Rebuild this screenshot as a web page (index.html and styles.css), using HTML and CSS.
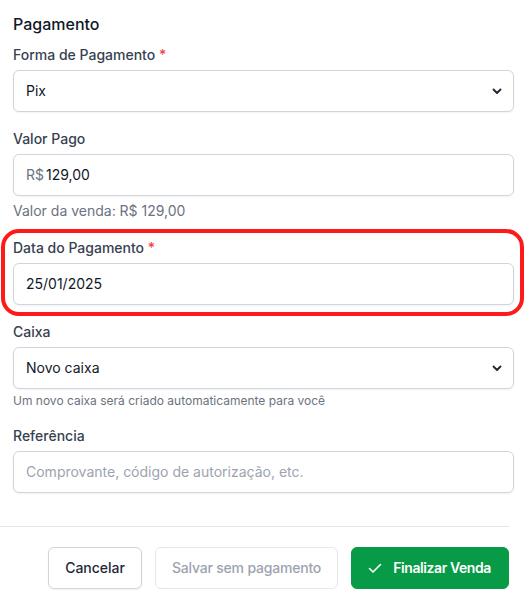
FILE: index.html
```html
<!DOCTYPE html>
<html lang="pt-BR">
<head>
<meta charset="utf-8">
<link rel="stylesheet" href="styles.css">
</head>
<body>
<div class="panel">
  <form class="form">
    <h2 class="title">Pagamento</h2>

    <div class="group">
      <label class="label">Forma de Pagamento <span class="req">*</span></label>
      <div class="field select">
        <span class="value">Pix</span>
        <svg class="chev" width="10" height="7" viewBox="0 0 10 7"><path d="M1.5 1.5 L5 5 L8.5 1.5" fill="none" stroke="#1f2937" stroke-width="1.9" stroke-linecap="round" stroke-linejoin="round"/></svg>
      </div>
    </div>

    <div class="group">
      <label class="label">Valor Pago</label>
      <div class="field">
        <span class="prefix">R$</span><span class="value">129,00</span>
      </div>
      <p class="help">Valor da venda: R$ 129,00</p>
    </div>

    <div class="group highlighted">
      <label class="label">Data do Pagamento <span class="req">*</span></label>
      <div class="field">
        <span class="value">25/01/2025</span>
      </div>
      <span class="mark"></span>
    </div>

    <div class="group">
      <label class="label">Caixa</label>
      <div class="field select">
        <span class="value">Novo caixa</span>
        <svg class="chev" width="10" height="7" viewBox="0 0 10 7"><path d="M1.5 1.5 L5 5 L8.5 1.5" fill="none" stroke="#1f2937" stroke-width="1.9" stroke-linecap="round" stroke-linejoin="round"/></svg>
      </div>
      <p class="help small">Um novo caixa será criado automaticamente para você</p>
    </div>

    <div class="group">
      <label class="label">Referência</label>
      <div class="field">
        <span class="placeholder">Comprovante, código de autorização, etc.</span>
      </div>
    </div>
  </form>

  <div class="footer">
    <button class="btn btn-outline" type="button">Cancelar</button>
    <button class="btn btn-disabled" type="button">Salvar sem pagamento</button>
    <button class="btn btn-primary" type="button">
      <svg width="16" height="16" viewBox="0 0 16 16"><path d="M2.5 8.5 L6 12 L13.5 4.5" fill="none" stroke="#ffffff" stroke-width="1.6" stroke-linecap="round" stroke-linejoin="round"/></svg>
      Finalizar Venda
    </button>
  </div>
</div>
</body>
</html>
```

FILE: styles.css
```css
* { box-sizing: border-box; }

html, body {
  margin: 0;
  padding: 0;
  background: #ffffff;
}

body {
  font-family: Inter, "Noto Sans", "Liberation Sans", sans-serif;
  color: #111827;
  width: 529px;
  height: 606px;
  overflow: hidden;
}

.panel {
  display: flex;
  flex-direction: column;
}

.form {
  display: flex;
  flex-direction: column;
  gap: 17px;
  padding: 12px 15px 0 13px;
}

.title {
  margin: 0 0 -8px;
  font-size: 16px;
  line-height: 24px;
  font-weight: 500;
  color: #111827;
}

.group {
  display: flex;
  flex-direction: column;
}

.highlighted {
  position: relative;
}

.mark {
  position: absolute;
  left: -12px;
  right: -10px;
  top: -9px;
  bottom: -11px;
  border: 4px solid #ff1a1a;
  border-radius: 18px;
  pointer-events: none;
}

.label {
  display: block;
  font-size: 14px;
  line-height: 20px;
  font-weight: 500;
  color: #374151;
  margin-bottom: 5px;
}

.req {
  color: #ef4444;
}

.field {
  height: 42px;
  border: 1px solid #d1d5db;
  border-radius: 6px;
  box-shadow: 0 1px 2px rgba(0, 0, 0, 0.05);
  background: #ffffff;
  display: flex;
  align-items: center;
  padding: 0 12px;
  font-size: 14px;
  line-height: 20px;
}

.select {
  justify-content: space-between;
  padding-right: 11px;
}

.value {
  color: #111827;
}

.prefix {
  color: #6b7280;
  margin-right: 2px;
}

.placeholder {
  color: #9ca3af;
}

.chev {
  display: block;
}

.help {
  margin: 5px 0 0;
  font-size: 14px;
  line-height: 20px;
  color: #6b7280;
}

.help.small {
  margin-top: 4px;
  font-size: 12px;
  line-height: 16px;
}

.footer {
  margin-top: 33px;
  margin-right: 20px;
  border-top: 1px solid #e5e7eb;
  padding-top: 20px;
  display: flex;
  justify-content: flex-end;
  gap: 13px;
}

.btn {
  height: 42px;
  margin: 0;
  border-radius: 6px;
  font-family: inherit;
  font-size: 14px;
  line-height: 20px;
  font-weight: 500;
  padding: 0 16px;
  display: inline-flex;
  align-items: center;
  gap: 10px;
  background: #ffffff;
  cursor: pointer;
}

.btn-outline {
  border: 1px solid #d1d5db;
  color: #1f2937;
  box-shadow: 0 1px 2px rgba(0, 0, 0, 0.05);
}

.btn-disabled {
  border: 1px solid #e5e7eb;
  color: #9ca3af;
  letter-spacing: -0.2px;
}

.btn-primary {
  border: 1px solid #079a47;
  background: #079a47;
  color: #ffffff;
  font-weight: 600;
  letter-spacing: -0.4px;
  padding: 0 17px 0 15px;
}
```
